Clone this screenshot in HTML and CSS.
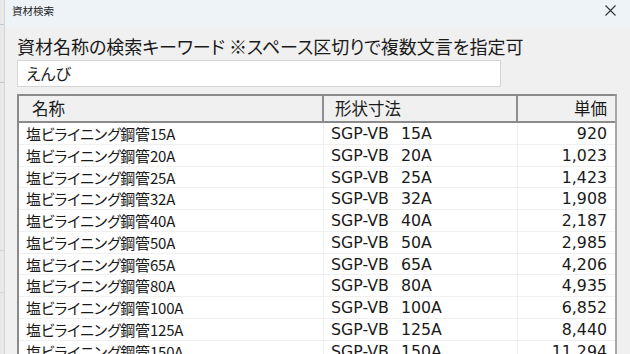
FILE: index.html
```html
<!DOCTYPE html>
<html lang="ja">
<head>
    <meta charset="UTF-8">
    <meta name="viewport" content="width=device-width, initial-scale=1.0">
    <title>資材検索</title>
    <link rel="stylesheet" href="styles.css">
</head>
<body>
    <div class="backdrop"></div>

    <div class="dialog">
        <div class="titlebar">
            <span class="title">資材検索</span>
            <span class="close">
                <svg width="11" height="11" viewBox="0 0 11 11">
                    <path d="M0.5 0.5 L10.5 10.5 M10.5 0.5 L0.5 10.5" stroke="#333" stroke-width="1.1" fill="none"/>
                </svg>
            </span>
        </div>

        <div class="content">
            <div class="label">資材名称の検索キーワード ※スペース区切りで複数文言を指定可</div>
            <div class="search">えんび</div>

            <div class="grid">
                <div class="row head">
                    <div class="cell name">名称</div>
                    <div class="cell shape">形状寸法</div>
                    <div class="cell price">単価</div>
                </div>
                <div class="row">
                    <div class="cell name">塩ビライニング鋼管15A</div>
                    <div class="cell shape">SGP-VB  15A</div>
                    <div class="cell price">920</div>
                </div>
                <div class="row">
                    <div class="cell name">塩ビライニング鋼管20A</div>
                    <div class="cell shape">SGP-VB  20A</div>
                    <div class="cell price">1,023</div>
                </div>
                <div class="row">
                    <div class="cell name">塩ビライニング鋼管25A</div>
                    <div class="cell shape">SGP-VB  25A</div>
                    <div class="cell price">1,423</div>
                </div>
                <div class="row">
                    <div class="cell name">塩ビライニング鋼管32A</div>
                    <div class="cell shape">SGP-VB  32A</div>
                    <div class="cell price">1,908</div>
                </div>
                <div class="row">
                    <div class="cell name">塩ビライニング鋼管40A</div>
                    <div class="cell shape">SGP-VB  40A</div>
                    <div class="cell price">2,187</div>
                </div>
                <div class="row">
                    <div class="cell name">塩ビライニング鋼管50A</div>
                    <div class="cell shape">SGP-VB  50A</div>
                    <div class="cell price">2,985</div>
                </div>
                <div class="row">
                    <div class="cell name">塩ビライニング鋼管65A</div>
                    <div class="cell shape">SGP-VB  65A</div>
                    <div class="cell price">4,206</div>
                </div>
                <div class="row">
                    <div class="cell name">塩ビライニング鋼管80A</div>
                    <div class="cell shape">SGP-VB  80A</div>
                    <div class="cell price">4,935</div>
                </div>
                <div class="row">
                    <div class="cell name">塩ビライニング鋼管100A</div>
                    <div class="cell shape">SGP-VB  100A</div>
                    <div class="cell price">6,852</div>
                </div>
                <div class="row">
                    <div class="cell name">塩ビライニング鋼管125A</div>
                    <div class="cell shape">SGP-VB  125A</div>
                    <div class="cell price">8,440</div>
                </div>
                <div class="row">
                    <div class="cell name">塩ビライニング鋼管150A</div>
                    <div class="cell shape">SGP-VB  150A</div>
                    <div class="cell price">11,294</div>
                </div>
            </div>
        </div>
    </div>
</body>
</html>
```

FILE: styles.css
```css
* {
    margin: 0;
    padding: 0;
    box-sizing: border-box;
}

body {
    font-family: "Noto Sans CJK JP", "Noto Sans", sans-serif;
    color: #1a1a1a;
    display: flex;
    height: 354px;
    overflow: hidden;
    background: #f0f0f0;
}

.backdrop {
    width: 5px;
    flex-shrink: 0;
    background:
        linear-gradient(#c8c8c8, #c8c8c8) 0 24px / 100% 1px no-repeat,
        linear-gradient(#c8c8c8, #c8c8c8) 0 82px / 100% 1px no-repeat,
        linear-gradient(#d4d4d4, #d4d4d4) 0 250px / 100% 1px no-repeat,
        linear-gradient(#d4d4d4, #d4d4d4) 0 292px / 100% 1px no-repeat,
        #e9e9e9;
    border-right: 1px solid #d6d6d6;
}

.dialog {
    flex: 1;
    display: flex;
    flex-direction: column;
    background: #f0f0f0;
}

.titlebar {
    flex-shrink: 0;
    height: 27px;
    background: #eef3f8;
    display: flex;
    align-items: center;
    justify-content: space-between;
    padding: 0 14px 6px 7px;
}

.title {
    font-size: 10.5px;
    color: #222;
}

.close {
    display: flex;
}

.content {
    flex-shrink: 0;
    padding: 5px 0 0 12px;
}

.label {
    font-size: 18px;
    font-feature-settings: "palt";
    line-height: 28px;
    color: #1a1a1a;
}

.search {
    width: 484px;
    height: 27px;
    background: #fff;
    border: 1px solid #d6d6d6;
    font-size: 16px;
    font-feature-settings: "palt";
    line-height: 25px;
    padding-left: 8px;
}

.grid {
    width: 600px;
    margin-top: 7px;
    background: #fff;
    border: 2px solid #8a8a8a;
    border-right-color: #a8a8a8;
    border-bottom: none;
    height: 270px;
}

.row {
    display: grid;
    grid-template-columns: 305px 194px 1fr;
    height: 21.75px;
    border-bottom: 1px solid #f0f0f0;
}

.cell {
    line-height: 21px;
    white-space: pre;
    padding-left: 7px;
}

.cell.name {
    font-size: 15px;
    letter-spacing: -0.2px;
    font-feature-settings: "palt";
}

.cell.shape,
.cell.price {
    font-family: "DejaVu Sans", "Noto Sans", sans-serif;
    font-size: 15.8px;
}

.cell.shape {
    word-spacing: 1px;
}

.row .cell.name,
.row .cell.shape {
    border-right: 1px solid #f0f0f0;
}

.cell.price {
    text-align: right;
    padding-right: 8px;
}

.row.head {
    height: 27px;
    background: #f0f0f0;
    border-bottom: 2px solid #8a8a8a;
}

.row.head .cell {
    font-family: "Noto Sans CJK JP", "Noto Sans", sans-serif;
    font-size: 16.5px;
    letter-spacing: 0;
    line-height: 25px;
    border-right: 2px solid #8e8e8e;
}

.row.head .cell.name {
    padding-left: 13px;
}

.row.head .cell.shape {
    padding-left: 11px;
}

.row.head .cell.price {
    border-right: none;
}
```
